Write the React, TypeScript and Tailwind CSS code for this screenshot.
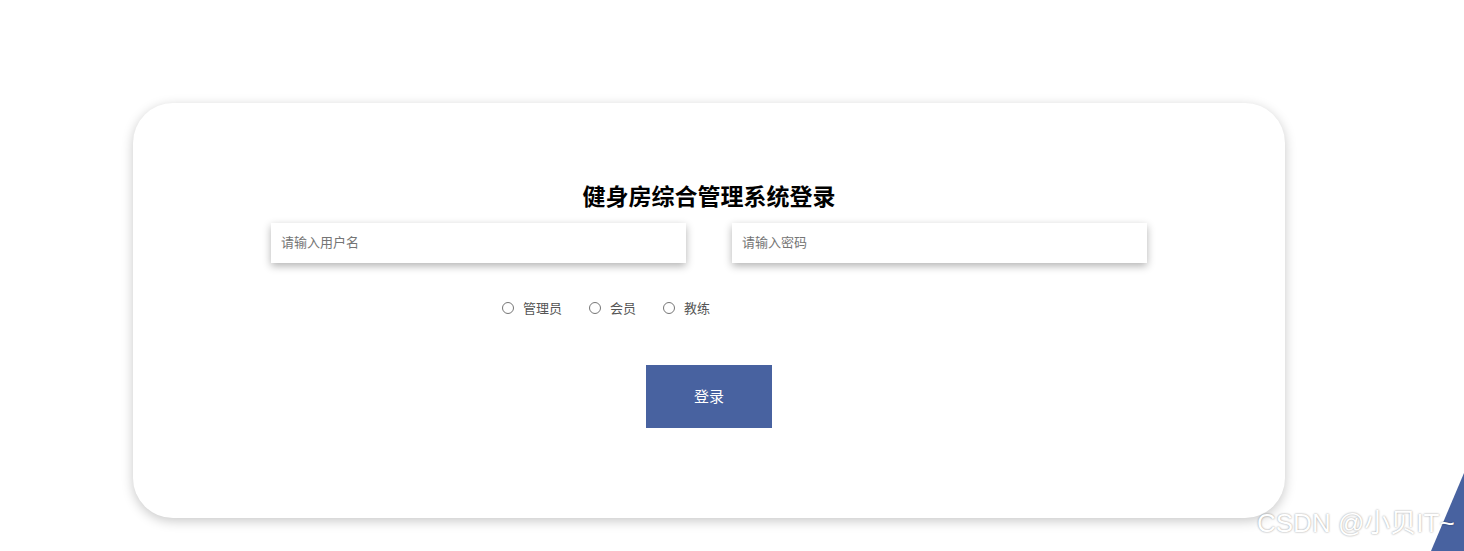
import React, { useState } from "react";

const roles = ["管理员", "会员", "教练"];

const App: React.FC = () => {
  const [role, setRole] = useState<string | null>(null);

  return (
    <div className="relative w-full h-[551px] bg-white overflow-hidden font-['Noto_Sans_CJK_SC','Liberation_Sans',sans-serif]">
      <div className="pt-[103px]">
        {/* Card */}
        <div className="ml-[133px] w-[1152px] h-[415px] rounded-[40px] bg-white shadow-[0_3px_12px_rgba(0,0,0,0.22)] pt-[76px]">
          <h1 className="text-center text-[23px] leading-[32px] font-bold text-black">
            健身房综合管理系统登录
          </h1>

          <div className="mt-[12px] flex justify-center gap-[46px]">
            <input
              className="w-[415px] h-[40px] px-[10px] pb-[3px] text-[13px] text-[#333] placeholder:text-[#757575] bg-white outline-none shadow-[0_3px_8px_rgba(0,0,0,0.3)]"
              placeholder="请输入用户名"
            />
            <input
              type="password"
              className="w-[415px] h-[40px] px-[10px] pb-[3px] text-[13px] text-[#333] placeholder:text-[#757575] bg-white outline-none shadow-[0_3px_8px_rgba(0,0,0,0.3)]"
              placeholder="请输入密码"
            />
          </div>

          <div className="mt-[35px] h-[20px] flex items-center pl-[369px] gap-[27px]">
            {roles.map((r) => (
              <label
                key={r}
                onClick={() => setRole(r)}
                className="flex items-center gap-[9px] text-[13px] text-[#555] cursor-pointer"
              >
                <span className="w-[12px] h-[12px] rounded-full border border-[#767676] flex items-center justify-center">
                  {role === r && <span className="w-[6px] h-[6px] rounded-full bg-[#4a62a0]" />}
                </span>
                {r}
              </label>
            ))}
          </div>

          <div className="mt-[47px] flex justify-center">
            <button className="w-[126px] h-[63px] bg-[#4862a0] text-white text-[15px]">
              登录
            </button>
          </div>
        </div>
      </div>

      {/* corner shape */}
      <svg className="absolute right-0 bottom-0" width="34" height="78" viewBox="0 0 34 78">
        <polygon points="34,0 34,78 1,78" fill="#4862a0" />
      </svg>

      {/* watermark */}
      <div className="absolute left-[1257px] top-[505px] text-[26px] leading-[36px] font-normal text-white font-['Liberation_Sans','Noto_Sans_CJK_SC',sans-serif] [text-shadow:0_0_2px_rgba(0,0,0,0.45)] whitespace-nowrap">
        CSDN @小贝IT~
      </div>
    </div>
  );
};

export default App;
